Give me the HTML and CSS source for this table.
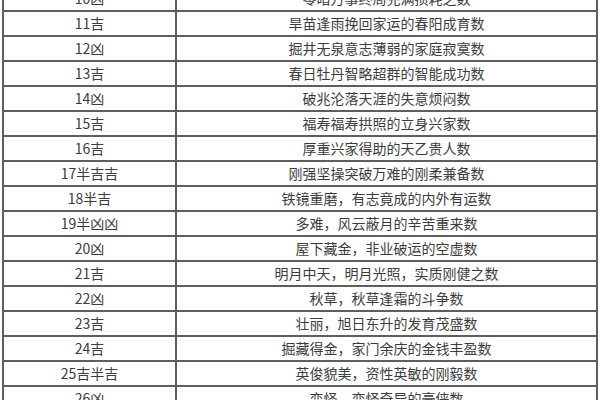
FILE: index.html
```html
<!DOCTYPE html>
<html lang="zh-CN">
<head>
<meta charset="utf-8">
<link rel="stylesheet" href="styles.css">
</head>
<body>
<div class="wrap">
<table class="num-table">
<tbody>
<tr><td class="k">10凶</td><td class="v">零暗万事终局充满损耗之数</td></tr>
<tr><td class="k">11吉</td><td class="v">旱苗逢雨挽回家运的春阳成育数</td></tr>
<tr><td class="k">12凶</td><td class="v">掘井无泉意志薄弱的家庭寂寞数</td></tr>
<tr><td class="k">13吉</td><td class="v">春日牡丹智略超群的智能成功数</td></tr>
<tr><td class="k">14凶</td><td class="v">破兆沦落天涯的失意烦闷数</td></tr>
<tr><td class="k">15吉</td><td class="v">福寿福寿拱照的立身兴家数</td></tr>
<tr><td class="k">16吉</td><td class="v">厚重兴家得助的天乙贵人数</td></tr>
<tr><td class="k">17半吉吉</td><td class="v">刚强坚操突破万难的刚柔兼备数</td></tr>
<tr><td class="k">18半吉</td><td class="v">铁镜重磨，有志竟成的内外有运数</td></tr>
<tr><td class="k">19半凶凶</td><td class="v">多难，风云蔽月的辛苦重来数</td></tr>
<tr><td class="k">20凶</td><td class="v">屋下藏金，非业破运的空虚数</td></tr>
<tr><td class="k">21吉</td><td class="v">明月中天，明月光照，实质刚健之数</td></tr>
<tr><td class="k">22凶</td><td class="v">秋草，秋草逢霜的斗争数</td></tr>
<tr><td class="k">23吉</td><td class="v">壮丽，旭日东升的发育茂盛数</td></tr>
<tr><td class="k">24吉</td><td class="v">掘藏得金，家门余庆的金钱丰盈数</td></tr>
<tr><td class="k">25吉半吉</td><td class="v">英俊貌美，资性英敏的刚毅数</td></tr>
<tr><td class="k">26凶</td><td class="v">变怪，变怪奇异的豪侠数</td></tr>
</tbody>
</table>
</div>
</body>
</html>
```
FILE: styles.css
```css
html, body {
  margin: 0;
  padding: 0;
  background: #ffffff;
  overflow: hidden;
}
.wrap {
  padding-left: 2px;
  margin-top: -15px;
}
.num-table {
  border-collapse: collapse;
  width: 596px;
  table-layout: fixed;
  font-family: "Noto Sans CJK SC", "Noto Sans", sans-serif;
  font-size: 14px;
  color: #3c3c3c;
}
.num-table td {
  border: 2px solid #5e5e5e;
  height: 23px;
  padding: 0;
  text-align: center;
  vertical-align: middle;
  line-height: 23px;
  white-space: nowrap;
}
.num-table td.k {
  width: 171px;
}
```
